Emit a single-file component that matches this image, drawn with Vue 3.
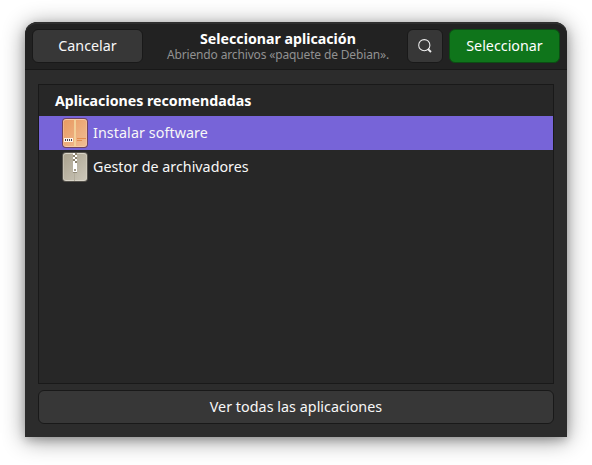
<script setup>
const apps = [
  { name: 'Instalar software', icon: 'package', selected: true },
  { name: 'Gestor de archivadores', icon: 'archive', selected: false },
]
</script>

<template>
  <main class="page">
    <section class="window">
      <header class="bar">
        <button class="btn cancel">Cancelar</button>
        <div class="heading">
          <h1>Seleccionar aplicación</h1>
          <p>Abriendo archivos «paquete de Debian».</p>
        </div>
        <button class="btn search" aria-label="Buscar">
          <svg width="16" height="16" viewBox="0 0 16 16" fill="none" stroke="#ededed">
            <circle cx="7.3" cy="7.2" r="5.6" stroke-width="1.05" />
            <path d="M10.9 11 14 14" stroke-width="1.8" />
          </svg>
        </button>
        <button class="btn select">Seleccionar</button>
      </header>
      <div class="content">
        <div class="list">
          <h2>Aplicaciones recomendadas</h2>
          <div v-for="app in apps" :key="app.name" class="row" :class="{ selected: app.selected }">
            <svg v-if="app.icon === 'package'" width="26" height="30" viewBox="0 0 26 30">
              <defs>
                <linearGradient id="box" x1="0" y1="0" x2="1" y2="1">
                  <stop offset="0" stop-color="#e99a61" />
                  <stop offset="1" stop-color="#f0bd94" />
                </linearGradient>
              </defs>
              <rect width="26" height="30" rx="4" fill="#70435f" />
              <rect x="1" y="1" width="24" height="28" rx="3" fill="#f5c9a6" />
              <rect x="1.5" y="2" width="23" height="26" rx="2.5" fill="url(#box)" />
              <path d="M12 1h2v28h-2z" fill="#f3cf98" />
              <path d="M2 20h9v4H2z" fill="#fff4e9" />
              <path d="M3 21h1v2H3zM5 21h1v2H5zM7 21h1v2H7zM9 21h1v2H9z" fill="#45404a" />
              <path d="M15 20h9v1h-9zM15 22h5v1h-5z" fill="#e38d50" />
            </svg>
            <svg v-else width="26" height="30" viewBox="0 0 26 30">
              <defs>
                <linearGradient id="zip" x1="0" y1="0" x2="1" y2="1">
                  <stop offset="0" stop-color="#aaa28f" />
                  <stop offset="1" stop-color="#cbc6b8" />
                </linearGradient>
              </defs>
              <rect width="26" height="30" rx="4" fill="#55524c" />
              <rect x="1" y="1" width="24" height="28" rx="3" fill="#d8d4c8" />
              <rect x="1.5" y="2" width="23" height="26" rx="2.5" fill="url(#zip)" />
              <path d="M12.5 20v9" stroke="#b3ad9c" />
              <path d="M11 1h4v11h-4z" fill="#8b826e" />
              <path d="M11 1h2v2h-2zM13 3h2v2h-2zM11 5h2v2h-2zM13 7h2v2h-2zM11 9h2v2h-2z" fill="#fff" />
              <path d="M11 11h4v9h-4z" fill="#fff" />
              <path d="M11 20h4v1h-4z" fill="#918a79" />
              <path d="M12 17h2v2h-2z" fill="#a29b8b" />
            </svg>
            <span :class="app.icon">{{ app.name }}</span>
          </div>
        </div>
        <button class="btn all">Ver todas las aplicaciones</button>
      </div>
    </section>
  </main>
</template>

<style>
body { margin: 0; background: #fff; }
</style>

<style scoped>
* { box-sizing: border-box; }
.page {
  width: 592px;
  height: 465px;
  padding: 22px 25px 28px;
  overflow: hidden;
  background: #fff;
  font: 14.3px/20px "Noto Sans", sans-serif;
  color: #f7f7f7;
}
.window {
  height: 415px;
  display: flex;
  flex-direction: column;
  border-radius: 12px 12px 0 0;
  background: #2c2c2c;
  overflow: hidden;
  box-shadow: 0 3px 22px rgba(0, 0, 0, .45), 0 3px 8px rgba(0, 0, 0, .18);
}
.bar {
  height: 48px;
  flex: none;
  display: flex;
  align-items: flex-start;
  padding: 7px 7px 0;
  background: #222;
  border-bottom: 1px solid #181818;
  border-radius: 12px 12px 0 0;
  box-shadow: inset 0 2px 0 #2f2f2f;
}
.btn {
  display: flex;
  align-items: center;
  justify-content: center;
  height: 34px;
  padding: 0;
  border: 1px solid #191919;
  border-radius: 6px;
  background: #373737;
  color: #f7f7f7;
  font: inherit;
  white-space: nowrap;
}
.cancel { width: 111px; }
.search { width: 36px; margin-right: 6px; }
.select { width: 111px; background: #0f751b; border-color: #0b4d13; color: #fff; }
.heading {
  flex: 1;
  padding-right: 9px;
  padding-left: 15px;
  text-align: center;
  white-space: nowrap;
}
h1, h2, p { margin: 0; }
h1 { font-size: 14.2px; line-height: 19px; color: #fff; }
p { margin-top: -1px; font-size: 12px; line-height: 16px; letter-spacing: -.15px; color: #919191; }
.content { flex: 1; display: flex; flex-direction: column; padding: 14px 13px 13px; gap: 6px; }
.list { height: 300px; border: 1px solid #191919; background: #272727; }
h2 { height: 31px; padding-left: 16px; font-size: 14.2px; line-height: 31px; color: #fff; white-space: nowrap; }
.row { height: 34px; display: flex; align-items: center; gap: 5px; padding-left: 23px; white-space: nowrap; }
.selected { background: #7764d8; }
.package { letter-spacing: .08px; }
.all { width: 100%; letter-spacing: .04px; }
</style>
